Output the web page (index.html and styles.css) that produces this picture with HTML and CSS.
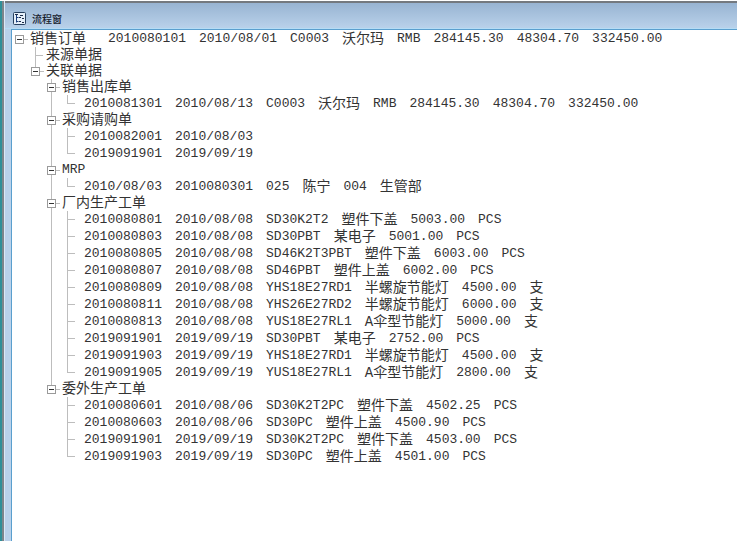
FILE: index.html
```html
<!DOCTYPE html>
<html lang="zh-CN">
    <head>
        <meta charset="UTF-8" />
        <meta name="viewport" content="width=device-width, initial-scale=1.0" />
        <title>流程窗</title>
        <link rel="stylesheet" href="styles.css">
    </head>
    <body>
        <div class="window">
            <header class="title-bar">
                <svg class="title-icon" width="13" height="13" viewBox="0 0 13 13">
                    <rect x="0.5" y="0.5" width="12" height="12" rx="1" fill="#e6f0fa" stroke="#27405f" />
                    <path d="M3.5 2v8.500M3.500 5.500h2M3.500 9.500h2" fill="none" stroke="#1c3f7c" />
                    <path d="M2 2.500h3M6 5.500h2M6 9.500h2M7 3.500h3M9 6.500h2M9 10.500h2" stroke="#1d2c48" />
                </svg>
                <h1 class="title-text">流程窗</h1>
            </header>

            <main class="panel">
                <ul class="tree">
                    <li class="node">
                        <div class="row root"><button class="toggle" aria-label="折叠"></button><span class="name">销售订单</span><span>2010080101</span><span>2010/08/01</span><span>C0003</span><span class="cn">沃尔玛</span><span>RMB</span><span>284145.30</span><span>48304.70</span><span>332450.00</span></div>
                        <ul>
                            <li class="node">
                                <div class="row"><span class="stub"></span><span class="name">来源单据</span></div>
                            </li>
                            <li class="node">
                                <div class="row"><button class="toggle" aria-label="折叠"></button><span class="name">关联单据</span></div>
                                <ul>
                                    <li class="node">
                                        <div class="row"><button class="toggle" aria-label="折叠"></button><span class="name">销售出库单</span></div>
                                        <ul>
                                            <li class="leaf"><span>2010081301</span><span>2010/08/13</span><span>C0003</span><span class="cn">沃尔玛</span><span>RMB</span><span>284145.30</span><span>48304.70</span><span>332450.00</span></li>
                                        </ul>
                                    </li>
                                    <li class="node">
                                        <div class="row"><button class="toggle" aria-label="折叠"></button><span class="name">采购请购单</span></div>
                                        <ul>
                                            <li class="leaf"><span>2010082001</span><span>2010/08/03</span></li>
                                            <li class="leaf"><span>2019091901</span><span>2019/09/19</span></li>
                                        </ul>
                                    </li>
                                    <li class="node">
                                        <div class="row"><button class="toggle" aria-label="折叠"></button><span>MRP</span></div>
                                        <ul>
                                            <li class="leaf"><span>2010/08/03</span><span>2010080301</span><span>025</span><span class="cn">陈宁</span><span>004</span><span class="cn">生管部</span></li>
                                        </ul>
                                    </li>
                                    <li class="node">
                                        <div class="row"><button class="toggle" aria-label="折叠"></button><span class="name">厂内生产工单</span></div>
                                        <ul>
                                            <li class="leaf"><span>2010080801</span><span>2010/08/08</span><span>SD30K2T2</span><span class="cn">塑件下盖</span><span>5003.00</span><span>PCS</span></li>
                                            <li class="leaf"><span>2010080803</span><span>2010/08/08</span><span>SD30PBT</span><span class="cn">某电子</span><span>5001.00</span><span>PCS</span></li>
                                            <li class="leaf"><span>2010080805</span><span>2010/08/08</span><span>SD46K2T3PBT</span><span class="cn">塑件下盖</span><span>6003.00</span><span>PCS</span></li>
                                            <li class="leaf"><span>2010080807</span><span>2010/08/08</span><span>SD46PBT</span><span class="cn">塑件上盖</span><span>6002.00</span><span>PCS</span></li>
                                            <li class="leaf"><span>2010080809</span><span>2010/08/08</span><span>YHS18E27RD1</span><span class="cn">半螺旋节能灯</span><span>4500.00</span><span class="cn">支</span></li>
                                            <li class="leaf"><span>2010080811</span><span>2010/08/08</span><span>YHS26E27RD2</span><span class="cn">半螺旋节能灯</span><span>6000.00</span><span class="cn">支</span></li>
                                            <li class="leaf"><span>2010080813</span><span>2010/08/08</span><span>YUS18E27RL1</span><span class="cn">A伞型节能灯</span><span>5000.00</span><span class="cn">支</span></li>
                                            <li class="leaf"><span>2019091901</span><span>2019/09/19</span><span>SD30PBT</span><span class="cn">某电子</span><span>2752.00</span><span>PCS</span></li>
                                            <li class="leaf"><span>2019091903</span><span>2019/09/19</span><span>YHS18E27RD1</span><span class="cn">半螺旋节能灯</span><span>4500.00</span><span class="cn">支</span></li>
                                            <li class="leaf"><span>2019091905</span><span>2019/09/19</span><span>YUS18E27RL1</span><span class="cn">A伞型节能灯</span><span>2800.00</span><span class="cn">支</span></li>
                                        </ul>
                                    </li>
                                    <li class="node">
                                        <div class="row"><button class="toggle" aria-label="折叠"></button><span class="name">委外生产工单</span></div>
                                        <ul>
                                            <li class="leaf"><span>2010080601</span><span>2010/08/06</span><span>SD30K2T2PC</span><span class="cn">塑件下盖</span><span>4502.25</span><span>PCS</span></li>
                                            <li class="leaf"><span>2010080603</span><span>2010/08/06</span><span>SD30PC</span><span class="cn">塑件上盖</span><span>4500.90</span><span>PCS</span></li>
                                            <li class="leaf"><span>2019091901</span><span>2019/09/19</span><span>SD30K2T2PC</span><span class="cn">塑件下盖</span><span>4503.00</span><span>PCS</span></li>
                                            <li class="leaf"><span>2019091903</span><span>2019/09/19</span><span>SD30PC</span><span class="cn">塑件上盖</span><span>4501.00</span><span>PCS</span></li>
                                        </ul>
                                    </li>
                                </ul>
                            </li>
                        </ul>
                    </li>
                </ul>
            </main>
        </div>
    </body>
</html>
```
FILE: styles.css
```css
:root {
    --frame: #b9d1ea;
    --frame-dark: #98b4d2;
    --edge: #5a9fce;
    --line: #bdbdbd;
    --text: #333;
}

* {
    margin: 0;
    padding: 0;
    box-sizing: border-box;
}

body {
    background-color: #fff;
    color: var(--text);
    font-family: "Liberation Mono", "Noto Sans CJK SC", monospace;
    font-size: 13px;
    line-height: 16px;
}

.window {
    display: flex;
    flex-direction: column;
    min-height: 100vh;
    padding-left: 5px;
    border-top: 1px solid #fff;
    background: linear-gradient(to right, #2f8f98 2px, #7d858c 2px, #7d858c 4px, #dbe8f5 4px, #dbe8f5 5px, var(--frame) 5px);
}

/* title bar */
.title-bar {
    display: flex;
    align-items: center;
    gap: 6px;
    height: 28px;
    padding: 6px 8px 0;
    border-top: 2px solid #74797f;
    border-bottom: 1px solid #b5dcf5;
    background: linear-gradient(var(--frame-dark), var(--frame));
}

.title-text {
    font-family: "Noto Sans CJK SC", sans-serif;
    font-size: 10px;
    font-weight: 500;
    line-height: 14px;
    color: #16202c;
}

.panel {
    flex: 1;
    margin-left: 6px;
    border-top: 1px solid var(--edge);
    border-left: 1px solid var(--edge);
    background-color: #fff;
}

/* tree */
.tree {
    padding: 1px 0 0 3px;
}

ul {
    list-style: none;
}

.node {
    position: relative;
}

.node > ul {
    padding-left: 16px;
}

.row,
.leaf {
    display: flex;
    align-items: center;
    white-space: nowrap;
}

.row {
    height: 16px;
}

.leaf {
    position: relative;
    gap: 13px;
    height: 17px;
    padding-left: 21px;
}

.root {
    gap: 13px;
}

.root .toggle {
    margin-right: -7px;
}

.root .name {
    margin-right: 9px;
}

.name,
.cn {
    font-size: 14px;
}

/* connector lines */
.node .node::before,
.leaf::before {
    content: "";
    position: absolute;
    top: 0;
    bottom: 0;
    left: 4px;
    border-left: 1px solid var(--line);
}

.node .node:last-child::before,
.leaf:last-child::before {
    bottom: auto;
    height: 9px;
}

.leaf::after {
    content: "";
    position: absolute;
    top: 8px;
    left: 5px;
    width: 7px;
    border-top: 1px solid var(--line);
}

.stub {
    width: 7px;
    margin: 0 3px 0 5px;
    border-top: 1px solid var(--line);
}

.toggle {
    position: relative;
    flex: none;
    width: 9px;
    height: 9px;
    margin-right: 6px;
    border: 1px solid #9a9a9a;
    background: linear-gradient(#333, #333) center / 5px 1px no-repeat #fff;
}

.toggle::after {
    content: "";
    position: absolute;
    top: 3px;
    left: 8px;
    width: 4px;
    border-top: 1px solid var(--line);
}
```
